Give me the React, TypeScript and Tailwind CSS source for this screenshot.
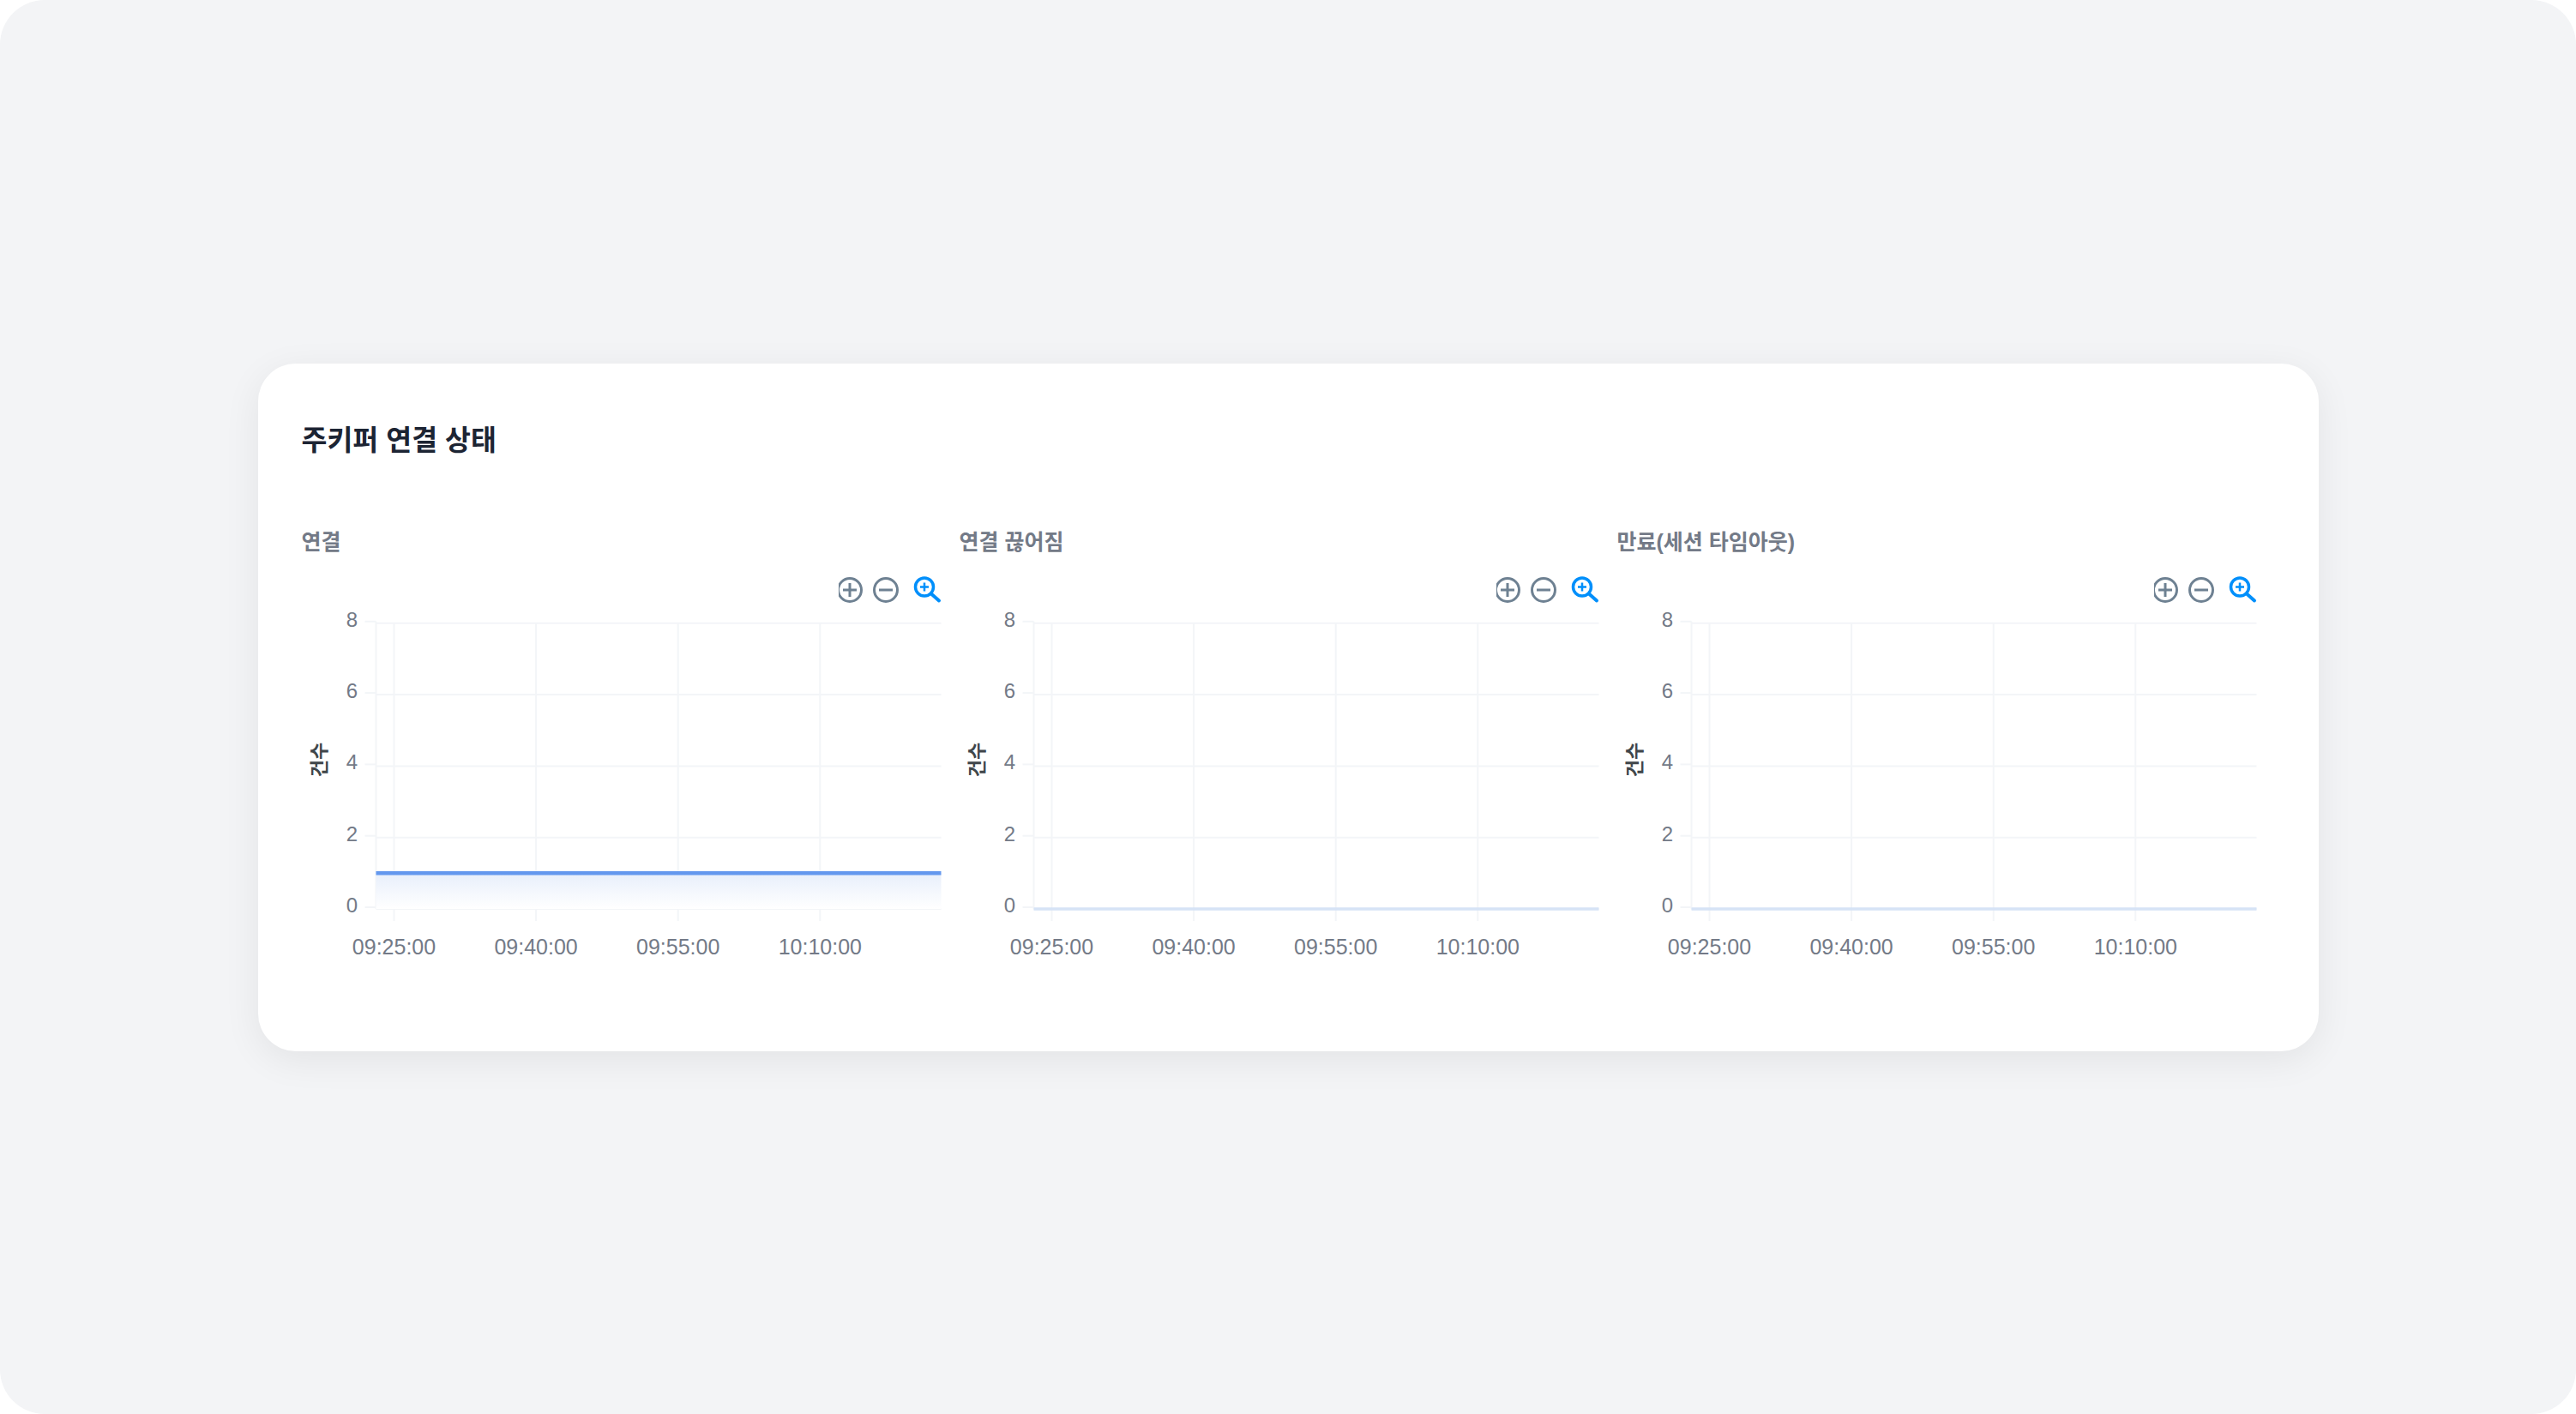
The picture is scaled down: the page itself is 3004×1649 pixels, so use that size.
const FONT = '"Liberation Sans", "Noto Sans CJK KR", sans-serif';

const charts = [
  { title: "연결", value: 1 },
  { title: "연결 끊어짐", value: 0 },
  { title: "만료(세션 타임아웃)", value: 0 },
];

const yTicks = [8, 6, 4, 2, 0];
const xTicks = ["09:25:00", "09:40:00", "09:55:00", "10:10:00"];

// chart coordinates, the svg starts at the card's inner left
const AXIS_X = 86.5;
const RIGHT = 745.5;
const yFor = (v: number) => 355 - v * 41.65;
const xFor = (i: number) => 107.5 + i * 165.6;

function Toolbar() {
  return (
    <div className="flex h-[37px] w-[746px] items-start justify-end">
      <svg width="120" height="37" viewBox="0 0 120 37" fill="none">
        <circle cx="13" cy="20" r="13.5" stroke="#6e8192" strokeWidth="3" />
        <path d="M13 12v16M5 20h16" stroke="#6e8192" strokeWidth="3" />
        <circle cx="55" cy="20" r="13.5" stroke="#6e8192" strokeWidth="3" />
        <path d="M47 20h16" stroke="#6e8192" strokeWidth="3" />
        <circle cx="100" cy="16.5" r="10.5" stroke="#008ffb" strokeWidth="3.5" />
        <path d="M100 11.5v10M95 16.5h10" stroke="#008ffb" strokeWidth="2.5" />
        <path d="M108 24.5l9 8" stroke="#008ffb" strokeWidth="4" strokeLinecap="round" />
      </svg>
    </div>
  );
}

function LineChart({ id, value }: { id: string; value: number }) {
  const lineY = yFor(value);
  return (
    <svg width="746" height="426" viewBox="0 0 746 426" style={{ fontFamily: FONT }}>
      <defs>
        <linearGradient id={id} x1="0" y1="0" x2="0" y2="1">
          <stop offset="0" stopColor="#e8effb" />
          <stop offset="1" stopColor="#ffffff" />
        </linearGradient>
      </defs>

      {yTicks.map((t) => (
        <g key={t}>
          <line x1={AXIS_X} x2={RIGHT} y1={yFor(t)} y2={yFor(t)} stroke="#f3f5f8" strokeWidth="2" />
          <line x1={AXIS_X - 13} x2={AXIS_X} y1={yFor(t) - 2} y2={yFor(t) - 2} stroke="#f3f5f8" strokeWidth="2" />
          <text x="65" y={yFor(t) + 4} textAnchor="end" fontSize="24" fill="#737a87">
            {t}
          </text>
        </g>
      ))}

      <line x1={AXIS_X} x2={AXIS_X} y1={yFor(8) - 2} y2={yFor(0)} stroke="#f3f5f8" strokeWidth="2" />
      {xTicks.map((t, i) => (
        <g key={t}>
          <line x1={xFor(i)} x2={xFor(i)} y1={yFor(8)} y2="369" stroke="#f3f5f8" strokeWidth="2" />
          <text x={xFor(i)} y="408" textAnchor="middle" fontSize="25" fill="#737a87">
            {t}
          </text>
        </g>
      ))}

      {value > 0 ? (
        <>
          <rect x={AXIS_X} y={lineY} width={RIGHT - AXIS_X} height={yFor(0) - lineY} fill={`url(#${id})`} />
          <line x1={AXIS_X} x2={RIGHT} y1={lineY} y2={lineY} stroke="#6498ee" strokeWidth="4.5" />
        </>
      ) : (
        <line x1={AXIS_X} x2={RIGHT} y1={lineY} y2={lineY} stroke="#d6e3f6" strokeWidth="3.5" />
      )}

      <text
        transform="translate(28 181) rotate(-90)"
        textAnchor="middle"
        fontSize="22"
        fontWeight="700"
        fill="#40464a"
      >
        건수
      </text>
    </svg>
  );
}

export default function App() {
  return (
    <div className="bg-white" style={{ fontFamily: FONT }}>
      <main className="flex h-[1649px] w-full items-center justify-center rounded-[52px] bg-[#f3f4f6]">
        <section className="h-[802px] w-[2403px] rounded-[44px] bg-white pt-[67px] pl-[51px] shadow-[0_10px_44px_rgba(0,0,0,0.07)]">
          <h1 className="text-[32.5px] leading-[46px] font-bold text-[#1c2433]">주키퍼 연결 상태</h1>

          <div className="mt-[77px] grid grid-cols-[767px_767px_767px]">
            {charts.map((c, i) => (
              <div key={c.title}>
                <h2 className="text-[25px] leading-[36px] font-semibold text-[#737a87]">{c.title}</h2>
                <div className="mt-[18px]">
                  <Toolbar />
                </div>
                <LineChart id={`area-${i}`} value={c.value} />
              </div>
            ))}
          </div>
        </section>
      </main>
    </div>
  );
}
